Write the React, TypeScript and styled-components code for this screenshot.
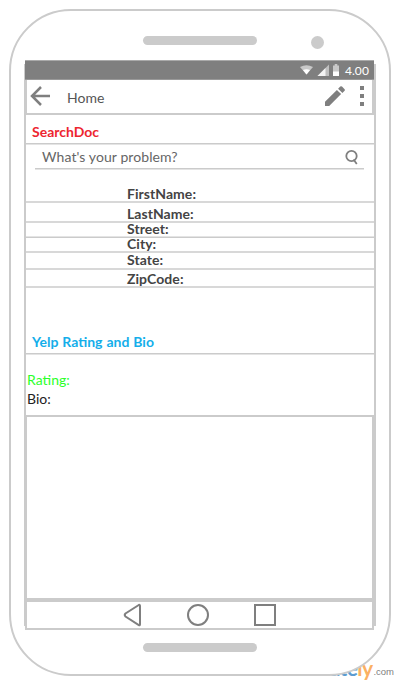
import React from "react";
import styled, { createGlobalStyle } from "styled-components";

const line = "#cbcbcb";
const ink = "#7f7f7f";

const GlobalStyle = createGlobalStyle`
  * { box-sizing: border-box; }
  html, body { margin: 0; background: #fff; }
  body { font-family: Lato, "Open Sans", sans-serif; overflow: hidden; }
`;

const Page = styled.main`
  position: relative;
  width: 400px;
  height: 685px;
  padding: 9px;
  overflow: hidden;
`;

const Watermark = styled.div`
  position: absolute;
  right: 6px;
  bottom: 4px;
  display: flex;
  align-items: baseline;
  font: 700 21px/26px Lato, sans-serif;
  letter-spacing: -0.6px;
  color: #5b9bd0;
`;

const WatermarkAccent = styled.span`
  color: #fbb062;
`;

const WatermarkDomain = styled.span`
  position: relative;
  top: -1px;
  margin-left: 1px;
  font: 400 9.5px "Liberation Sans", sans-serif;
  letter-spacing: 0;
  color: #808080;
`;

const Phone = styled.div`
  position: relative;
  width: 382px;
  height: 667px;
  border: 2px solid ${line};
  border-radius: 62px;
  background: #fff;
  display: flex;
  flex-direction: column;
`;

const Earpiece = styled.div`
  height: 49px;
  display: grid;
  grid-template-columns: 132px 114px 1fr;
  align-items: start;
  padding-top: 25px;
`;

const Speaker = styled.div`
  grid-column: 2;
  width: 114px;
  height: 9px;
  border-radius: 5px;
  background: ${line};
`;

const Camera = styled.div`
  width: 13px;
  height: 13px;
  margin-left: 54px;
  border-radius: 50%;
  background: ${line};
`;

const Chin = styled.div`
  display: flex;
  padding: 13px 0 0 132px;
`;

const Screen = styled.div`
  position: relative;
  width: 352px;
  height: 570px;
  margin-left: 13px;
  padding: 0 2px 0 1px;
  display: flex;
  flex-direction: column;

  &::before {
    content: "";
    position: absolute;
    inset: 4px 0;
    border: solid ${line};
    border-width: 0 2px;
  }
`;

const StatusBar = styled.div`
  position: relative;
  height: 20px;
  border-top: 1px solid #aaa;
  border-bottom: 1px solid #999;
  background: ${ink};
  display: flex;
  align-items: center;
  justify-content: flex-end;
  padding-right: 5px;
`;

const Clock = styled.span`
  margin-left: 5px;
  color: #fff;
  font-size: 12px;
  line-height: 18px;
  letter-spacing: 0.1px;
  padding-top: 2px;
`;

const AppBar = styled.header`
  position: relative;
  height: 35px;
  border: solid ${line};
  border-width: 0 2px 2px;
  background: #fff;
  display: flex;
  align-items: center;
`;

const AppTitle = styled.h1`
  flex: 1;
  margin: 3px 0 0 16px;
  font-size: 14px;
  line-height: 18px;
  font-weight: 400;
  color: #555;
`;

const Content = styled.div`
  height: 300px;
  margin: 0 -1px 0 1px;
  display: flex;
  flex-direction: column;
`;

const SectionTitle = styled.h2<{ $color: string; $height: number }>`
  height: ${(p) => p.$height}px;
  margin: 0;
  padding: 0 0 2px 6px;
  display: flex;
  align-items: flex-end;
  font-size: 14px;
  line-height: 18px;
  word-spacing: 0.5px;
  font-weight: 700;
  color: ${(p) => p.$color};
`;

const tones = {
  crisp: ["#cbcbcb", "#e4e4e4"],
  soft: ["#d8d8d8", "#d8d8d8"],
  low: ["#e4e4e4", "#cbcbcb"],
};

const Rule = styled.div<{ $tone?: keyof typeof tones }>`
  flex: none;
  height: 2px;
  border-top: 1px solid ${(p) => tones[p.$tone ?? "crisp"][0]};
  background: ${(p) => tones[p.$tone ?? "crisp"][1]};
`;

const SearchField = styled.div`
  margin: 0 11px 0 9px;
`;

const SearchRow = styled.div`
  height: 23px;
  padding: 1px 5px 0 7px;
  display: flex;
  align-items: center;
  justify-content: space-between;
  font-size: 14px;
  line-height: 18px;
  letter-spacing: 0.09px;
  color: #666;
`;

const Field = styled.div<{ $height: number; $drop: number }>`
  height: ${(p) => p.$height}px;
  padding-left: 101px;
  display: flex;
  align-items: flex-end;
  font-size: 14px;
  line-height: 14px;
  letter-spacing: 0.05px;
  font-weight: 700;
  color: #444;

  span {
    position: relative;
    margin-bottom: ${(p) => -p.$drop}px;
  }
`;

const Detail = styled.div<{ $color: string }>`
  padding-left: 1px;
  height: 19px;
  font-size: 14px;
  line-height: 18px;
  color: ${(p) => p.$color};
`;

const Details = styled.div`
  padding-top: 16px;
`;

const BioBox = styled.div`
  position: relative;
  height: 185px;
  border: 2px solid ${line};
  background: #fff;
`;

const NavBar = styled.nav`
  position: relative;
  height: 30px;
  border: 2px solid ${line};
  background: #fff;
  display: flex;
  justify-content: center;
  align-items: center;
`;

const NavIcons = styled.svg`
  display: block;
  fill: none;
  stroke: ${ink};
  stroke-width: 2;
`;

const fields = [
  { label: "FirstName:", height: 31, drop: 0, tone: "soft" },
  { label: "LastName:", height: 18, drop: 0, tone: "soft" },
  { label: "Street:", height: 13, drop: 0, tone: "low" },
  { label: "City:", height: 13, drop: 0, tone: "soft" },
  { label: "State:", height: 15, drop: -1, tone: "soft" },
  { label: "ZipCode:", height: 16, drop: 0, tone: "soft" },
] as const;

function StatusIcons() {
  return (
    <svg width="40" height="12" viewBox="0 0 40 12">
      <path d="M0 3 Q6.5 -0.5 13 3 L6.5 10.5Z" fill="#c8c8c8" />
      <path d="M3 6 Q6.5 4.3 10 6 L6.5 10.5Z" fill="#fff" />
      <path d="M17.5 12 L29 0.5 V12Z" fill="#c0c0c0" />
      <path d="M17.5 12 L25.5 4 V12Z" fill="#f4f4f4" />
      <path d="M33 1.5 H34.7 V0 H37.3 V1.5 H39 V12 H33Z" fill="#c8c8c8" />
      <path d="M33 7.5 H39 V12 H33Z" fill="#fff" />
    </svg>
  );
}

function BackArrow() {
  return (
    <svg width="24" height="24" viewBox="27 85 24 24">
      <path d="M41 87 L32 96 L41 105 M31.5 96.1 H50" fill="none" stroke={ink} strokeWidth="2.5" />
    </svg>
  );
}

function BarActions() {
  return (
    <svg width="48" height="24" viewBox="324 85 48 24">
      <path
        d="M325 106 V101.8 L336.9 89.9 L341.1 94.1 L329.2 106Z M338.1 88.7 L340.2 86.6 Q341.1 85.7 342 86.6 L344.6 89.2 Q345.4 90 344.6 90.8 L342.4 92.9Z"
        fill={ink}
      />
      <path d="M360 86 h4 v4 h-4Z M360 94 h4 v4 h-4Z M360 102 h4 v4 h-4Z" fill={ink} />
    </svg>
  );
}

export default function App() {
  return (
    <Page>
      <GlobalStyle />
      <Watermark>
        create<WatermarkAccent>ly</WatermarkAccent>
        <WatermarkDomain>.com</WatermarkDomain>
      </Watermark>
      <Phone>
        <Earpiece>
          <Speaker />
          <Camera />
        </Earpiece>
        <Screen>
          <StatusBar>
            <StatusIcons />
            <Clock>4.00</Clock>
          </StatusBar>
          <AppBar>
            <BackArrow />
            <AppTitle>Home</AppTitle>
            <BarActions />
          </AppBar>
          <Content>
            <SectionTitle $color="#ed2630" $height={28}>SearchDoc</SectionTitle>
            <Rule />
            <SearchField>
              <SearchRow>
                What's your problem?
                <svg width="14" height="16" viewBox="0 0 14 16">
                  <circle cx="6.5" cy="7" r="5.2" fill="none" stroke={ink} strokeWidth="1.8" />
                  <path d="M8.5 10.5 L11.8 15" stroke={ink} strokeWidth="1.8" />
                </svg>
              </SearchRow>
              <Rule />
            </SearchField>
            {fields.map((f) => (
              <React.Fragment key={f.label}>
                <Field $height={f.height} $drop={f.drop}>
                  <span>{f.label}</span>
                </Field>
                <Rule $tone={f.tone} />
              </React.Fragment>
            ))}
            <SectionTitle $color="#14aeea" $height={65}>Yelp Rating and Bio</SectionTitle>
            <Rule />
            <Details>
              <Detail $color="#2aff2a">Rating:</Detail>
              <Detail $color="#222">Bio:</Detail>
            </Details>
          </Content>
          <BioBox />
          <NavBar>
            <NavIcons width="156" height="26" viewBox="122 602 156 26">
              <path d="M138.8 605 L125.5 613.5 Q124 615 125.5 616.5 L138.8 625.2 Q140 625.7 140 624.2 V606 Q140 604.5 138.8 605Z" />
              <circle cx="198" cy="615" r="10" />
              <path d="M255 605 H275 V625 H255Z" />
            </NavIcons>
          </NavBar>
        </Screen>
        <Chin>
          <Speaker />
        </Chin>
      </Phone>
    </Page>
  );
}
